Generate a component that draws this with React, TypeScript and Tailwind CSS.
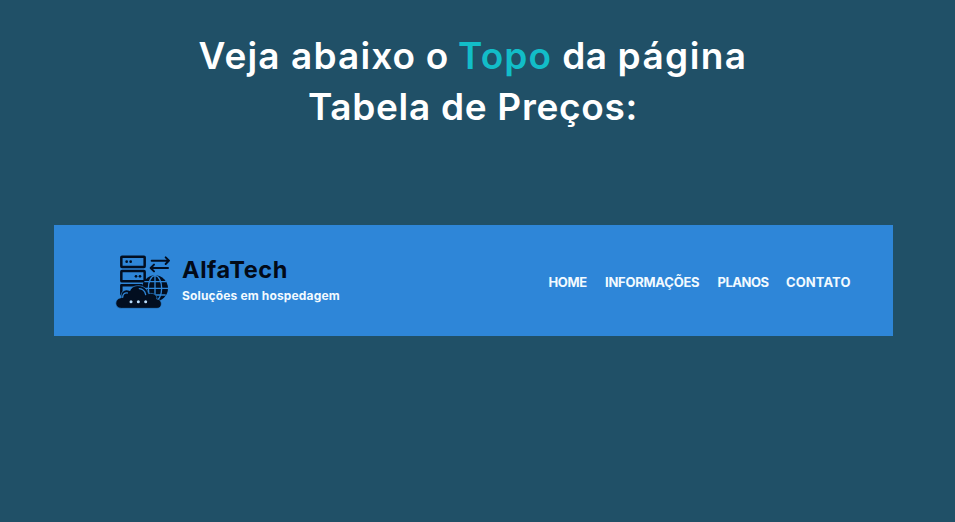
const navItems = [
  { label: "HOME", style: "w-[39px] tracking-[-0.35px]" },
  { label: "INFORMAÇÕES", style: "w-[95px] tracking-[-0.25px]" },
  { label: "PLANOS", style: "w-[51px] tracking-[-0.5px]" },
  { label: "CONTATO", style: "w-[65px] tracking-[0.1px]" },
];

function HostingLogo() {
  return (
    <svg viewBox="15 18 168 168" className="h-[56px] w-[56px] shrink-0" fill="none">
      <g stroke="#020e20" strokeWidth="7.5" strokeLinejoin="round" strokeLinecap="round">
        <rect x="34" y="26" width="70" height="31" rx="2" />
        <rect x="34" y="69" width="70" height="31" rx="2" />
        <path d="M34 139V112H94" />
        <path d="M125 38H175M167 28L177 38L167 48" strokeWidth="6" />
        <path d="M174 60H124M132 50L122 60L132 70" strokeWidth="6" />
      </g>
      <g fill="#020e20">
        <circle cx="50" cy="41" r="4" />
        <circle cx="62" cy="41" r="4" />
        <circle cx="78" cy="85" r="4" />
        <circle cx="90" cy="85" r="4" />
        <circle cx="135" cy="121" r="39" />
      </g>
      <g stroke="#2e86d8" strokeWidth="4">
        <ellipse cx="135" cy="121" rx="20" ry="38" />
        <path d="M135 82V160M96 121H174M103 101H168M106 141H167" />
      </g>
      <path
        d="M34 181C12 181 12 151 34 149C30 131 45 121 60 128C67 107 107 106 116 137C132 133 143 143 140 153C159 154 158 181 141 181Z"
        fill="#020e20"
        stroke="#2e86d8"
        strokeWidth="2"
      />
      <path d="M88 122C99 123 105 130 107 140M38 148C38 138 44 134 52 135" stroke="#2e86d8" strokeWidth="4" strokeLinecap="round" />
      <g fill="#b9dcfa">
        <circle cx="63" cy="161" r="4.5" />
        <circle cx="85" cy="161" r="4.5" />
        <circle cx="107" cy="161" r="4.5" />
      </g>
    </svg>
  );
}

export default function App() {
  return (
    <main className="h-[522px] w-[955px] overflow-hidden bg-[#205067] pt-[30px] font-['Inter',sans-serif]">
      <h1 className="flex h-[195px] flex-col items-center pr-[9px] text-[37px] leading-[51px] font-semibold whitespace-nowrap text-white">
        <span className="tracking-[1.12px]">
          Veja abaixo<span className="tracking-[0.2px]"> o </span>
          <span className="text-[#12bdc8]">Topo</span>
          <span className="tracking-[0.6px]"> da </span>
          <span className="tracking-[1.4px]">página</span>
        </span>
        <span className="tracking-[0.7px]">Tabela de Preços:</span>
      </h1>
      <header className="ml-[54px] flex h-[111px] w-[839px] items-center justify-between bg-[#2e86d8] pr-[42px] pl-[61px]">
        <div className="flex items-center gap-[11px] pt-[3px]">
          <HostingLogo />
          <div className="whitespace-nowrap">
            <div className="text-[23.5px] leading-[28px] font-bold tracking-[0.6px] text-[#020a18]">AlfaTech</div>
            <div className="text-[12px] leading-[24px] font-bold tracking-[0.15px] text-[#f2faff]">Soluções em hospedagem</div>
          </div>
        </div>
        <nav className="flex gap-[17.5px] pt-[2px] text-[13px] leading-5 font-bold whitespace-nowrap text-[#f2faff]">
          {navItems.map((item) => (
            <a key={item.label} className={item.style}>{item.label}</a>
          ))}
        </nav>
      </header>
    </main>
  );
}
